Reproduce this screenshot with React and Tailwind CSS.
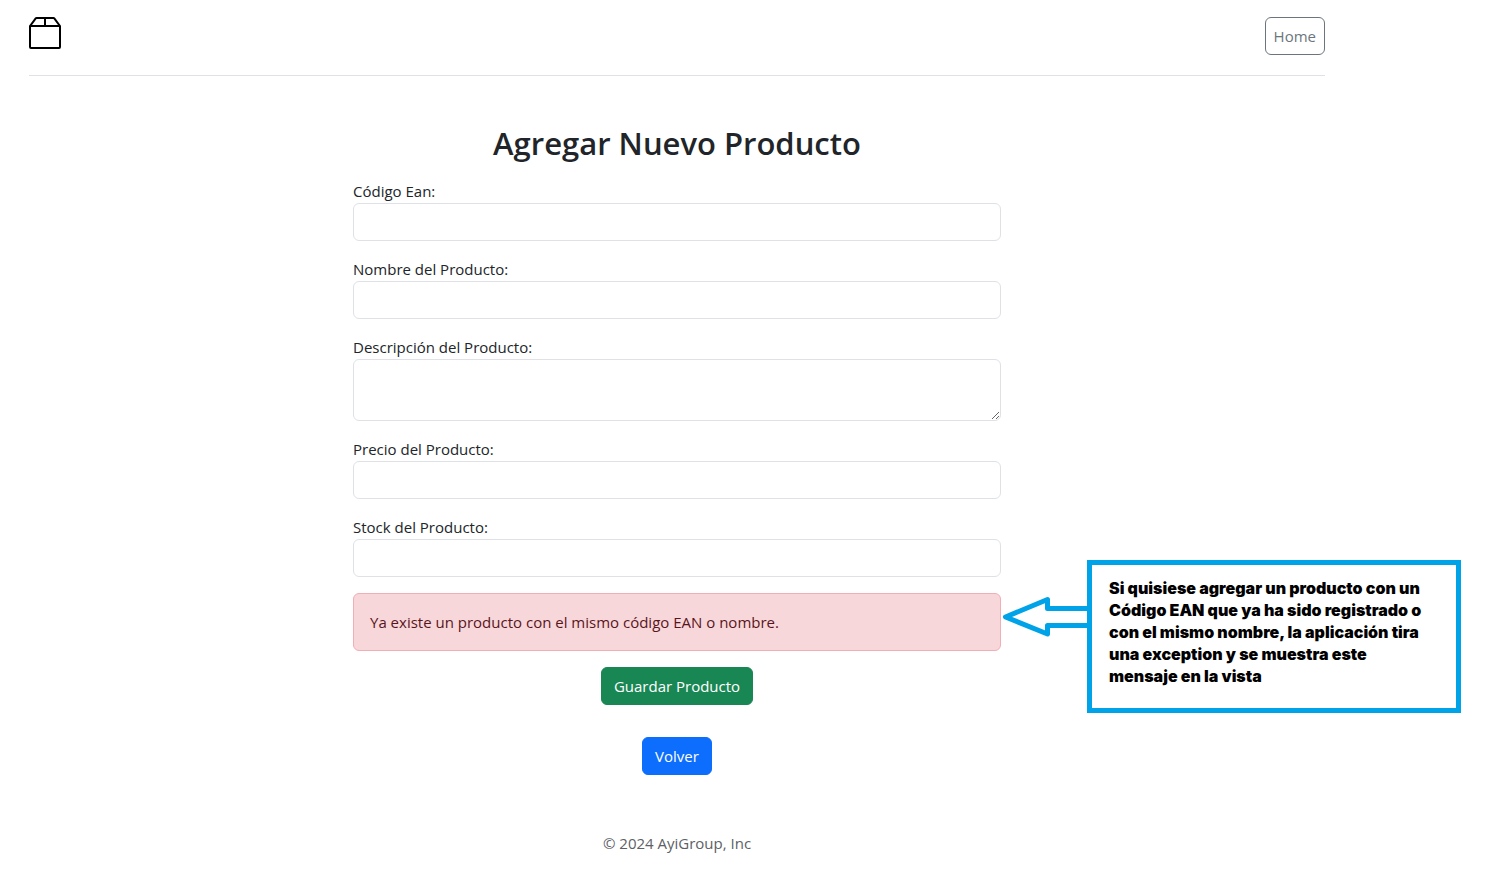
import { BsBox2 } from "react-icons/bs";

const control =
  "block w-full rounded-md border border-[#dee2e6] bg-white px-3 text-[#212529] outline-none focus:border-[#86b7fe]";

function Field({ id, label, multiline = false, type = "text" }) {
  return (
    <div className="mb-4">
      <label htmlFor={id} className="block">
        {label}
      </label>
      {multiline ? (
        <textarea id={id} name={id} className={`${control} h-[62px] py-1.5`} />
      ) : (
        <input id={id} name={id} type={type} className={`${control} h-[38px]`} />
      )}
    </div>
  );
}

function Callout() {
  return (
    <aside className="absolute top-0 left-full w-[460px]">
      <div className="-mt-[33px] ml-[86px] min-h-[153px] border-5 border-[#00a2e8] bg-white py-3 pl-[17px]">
        <p className="w-[324px] font-['Inter',sans-serif] text-base leading-[22px] font-black text-black">
          Si quisiese agregar un producto con un Código EAN que ya ha sido registrado o con el
          mismo nombre, la aplicación tira una exception y se muestra este mensaje en la vista
        </p>
      </div>
      <svg
        aria-hidden="true"
        className="absolute top-0 left-0"
        width="90"
        height="48"
        viewBox="0 0 90 48"
        fill="none"
        stroke="#00a2e8"
        strokeWidth="5"
        strokeLinejoin="round"
      >
        <path d="M88 15.500H46.500V6.500L4.500 24L46.500 41V32.500H88" />
      </svg>
    </aside>
  );
}

export default function App() {
  return (
    <div className="overflow-x-hidden bg-white pt-[17px] pr-[161px] pb-6 pl-[29px] font-['Open_Sans','Noto_Sans',sans-serif] text-[15px] leading-6 text-[#212529]">
      <header className="flex items-start justify-between border-b border-[#dee2e6] pb-5">
        <a href="#" aria-label="Productos" className="text-black">
          <BsBox2 size={32} />
        </a>
        <nav>
          <a
            href="#"
            className="block rounded-md border border-[#6c757d] px-2 py-1.5 text-[#6c757d]"
          >
            Home
          </a>
        </nav>
      </header>

      <main className="mx-auto mt-12 w-1/2">
        <h1 className="mb-4 text-center text-[31px] leading-[39px] font-semibold">
          Agregar Nuevo Producto
        </h1>
        <form>
          <Field id="codigoEan" label="Código Ean:" />
          <Field id="nombre" label="Nombre del Producto:" />
          <Field id="descripcion" label="Descripción del Producto:" multiline />
          <Field id="precio" label="Precio del Producto:" />
          <Field id="stock" label="Stock del Producto:" />
          <div className="relative mb-4">
            <div
              role="alert"
              className="rounded-md border border-[#f1aeb5] bg-[#f8d7da] p-4 text-[#58151c]"
            >
              Ya existe un producto con el mismo código EAN o nombre.
            </div>
            <Callout />
          </div>
          <div className="flex flex-col items-center gap-8">
            <button
              type="submit"
              className="rounded-md border border-[#198754] bg-[#198754] px-3 py-1.5 text-white"
            >
              Guardar Producto
            </button>
            <a
              href="#"
              className="rounded-md border border-[#0d6efd] bg-[#0d6efd] px-3 py-1.5 text-white"
            >
              Volver
            </a>
          </div>
        </form>
      </main>

      <footer className="mt-14 text-center text-[#5d6166]">© 2024 AyiGroup, Inc</footer>
    </div>
  );
}
